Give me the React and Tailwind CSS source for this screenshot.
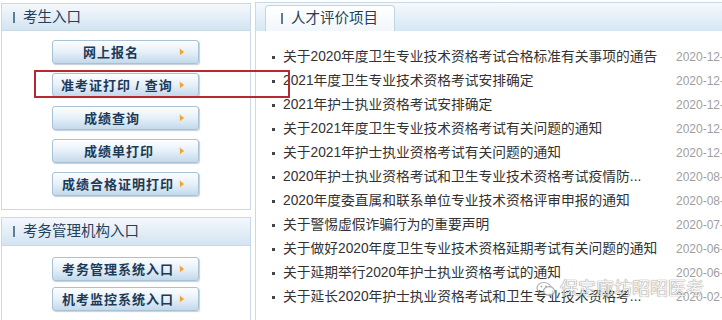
import React from 'react'

const cjk = { fontFamily: '"Liberation Sans", "Noto Sans CJK SC", sans-serif' }

const examBtns = [
  { label: '网上报名', pad: 'pl-[30px]' },
  { label: '准考证打印 / 查询', pad: 'pl-[8px]' },
  { label: '成绩查询', pad: 'pl-[31px]' },
  { label: '成绩单打印', pad: 'pl-[31px]' },
  { label: '成绩合格证明打印', pad: 'pl-[9px]' },
]

const adminBtns = [
  { label: '考务管理系统入口', pad: 'pl-[9px]' },
  { label: '机考监控系统入口', pad: 'pl-[9px]' },
]

const news = [
  ['关于2020年度卫生专业技术资格考试合格标准有关事项的通告', '2020-12-'],
  ['2021年度卫生专业技术资格考试安排确定', '2020-12-'],
  ['2021年护士执业资格考试安排确定', '2020-12-'],
  ['关于2021年度卫生专业技术资格考试有关问题的通知', '2020-12-'],
  ['关于2021年护士执业资格考试有关问题的通知', '2020-12-'],
  ['2020年护士执业资格考试和卫生专业技术资格考试疫情防...', '2020-08-'],
  ['2020年度委直属和联系单位专业技术资格评审申报的通知', '2020-08-'],
  ['关于警惕虚假诈骗行为的重要声明', '2020-07-'],
  ['关于做好2020年度卫生专业技术资格延期考试有关问题的通知', '2020-06-'],
  ['关于延期举行2020年护士执业资格考试的通知', '2020-06-'],
  ['关于延长2020年护士执业资格考试和卫生专业技术资格考...', '2020-02-'],
]

function Arrow() {
  return (
    <svg width="8" height="10" viewBox="0 0 8 10" className="ml-auto mr-[12px] shrink-0">
      <polygon points="1,0.5 7,5 1,9.5" fill="#fbe2b0" />
      <polygon points="2,2 6,5 2,8" fill="#eda33a" />
    </svg>
  )
}

function EntryButton({ label, pad }) {
  return (
    <div
      className={`flex items-center w-[147px] h-[24px] rounded-[3px] border border-[#a9c1d4] bg-gradient-to-b from-[#fdfeff] via-[#e6f0f8] to-[#c3d9eb] shadow-[1px_1px_1px_rgba(90,120,150,0.35)] ${pad}`}
    >
      <span className="text-[13px] font-bold tracking-[1px] text-[#1c3a57] leading-none whitespace-nowrap">{label}</span>
      <Arrow />
    </div>
  )
}

function PanelHeader({ title, h }) {
  return (
    <div className={`flex items-center ${h} border-b border-[#c9d9e6] bg-gradient-to-b from-[#f4f8fc] to-[#d3e4f2] pl-[11px]`}>
      <span className="w-[2px] h-[11px] bg-[#5c7d9a] mr-[8px]" />
      <span className="text-[14.5px] text-[#23405a] leading-none">{title}</span>
    </div>
  )
}

export default function App() {
  return (
    <div className="relative w-[722px] h-[320px] overflow-hidden bg-white flex" style={cjk}>
      {/* left column */}
      <div className="ml-[1px] w-[250px] shrink-0 flex flex-col">
        <div className="mt-[3px] h-[207px] border border-[#c9d9e6] bg-white">
          <PanelHeader title="考生入口" h="h-[27px]" />
          <div className="pl-[50px] pt-[9px] flex flex-col gap-[9px]">
            {examBtns.map(b => <EntryButton key={b.label} {...b} />)}
          </div>
        </div>
        <div className="mt-[7px] flex-1 border border-[#c9d9e6] border-b-0 bg-white">
          <PanelHeader title="考务管理机构入口" h="h-[28px]" />
          <div className="pl-[50px] pt-[11px] flex flex-col gap-[6px]">
            {adminBtns.map(b => <EntryButton key={b.label} {...b} />)}
          </div>
        </div>
      </div>

      {/* right column */}
      <div className="ml-[4px] mt-[2px] w-[500px] shrink-0 border-l border-t border-[#c9d9e6] bg-white">
        <div className="h-[28px] bg-gradient-to-b from-[#f5f9fd] to-[#d6e7f4] pl-[9px] pt-[2px] flex">
          <div className="flex items-center w-[130px] h-[26px] rounded-t-[4px] border border-b-0 border-[#c3d5e4] bg-gradient-to-b from-[#ffffff] to-[#f2f7fb] pl-[15px]">
            <span className="w-[2px] h-[11px] bg-[#5c7d9a] mr-[8px]" />
            <span className="text-[14.5px] text-[#23405a] leading-none">人才评价项目</span>
          </div>
        </div>
        <ul className="pt-[14px] pl-[16px]">
          {news.map(([t, d]) => (
            <li key={t} className="flex items-center h-[24px]">
              <span className="w-[3px] h-[3px] bg-[#444] shrink-0" />
              <span className="ml-[8px] w-[393px] shrink-0 text-[13.75px] text-[#333] leading-none whitespace-nowrap overflow-hidden">{t}</span>
              <span className="text-[12px] text-[#a0a0a0] leading-none whitespace-nowrap">{d}</span>
            </li>
          ))}
        </ul>
      </div>

      {/* selection highlight */}
      <div className="absolute left-[34px] top-[70px] w-[256px] h-[28px] border-2 border-[#b8282e]" />

      {/* watermark */}
      <div className="absolute left-[536px] top-[280px] flex items-center gap-[4px] opacity-80">
        <svg width="20" height="18" viewBox="0 0 20 18">
          <ellipse cx="8" cy="8" rx="7" ry="5.5" fill="none" stroke="#9a9a9a" strokeWidth="1.2" />
          <ellipse cx="13" cy="11" rx="5.5" ry="4.3" fill="#fff" stroke="#9a9a9a" strokeWidth="1.2" />
          <circle cx="5.5" cy="6.5" r="0.9" fill="#9a9a9a" />
          <circle cx="10" cy="6.5" r="0.9" fill="#9a9a9a" />
        </svg>
        <span className="text-[18px] text-[#f4f4f4] leading-none whitespace-nowrap [text-shadow:0_0_1px_#777,0_0_1px_#777]">保定廊坊昭昭医考</span>
      </div>
    </div>
  )
}
